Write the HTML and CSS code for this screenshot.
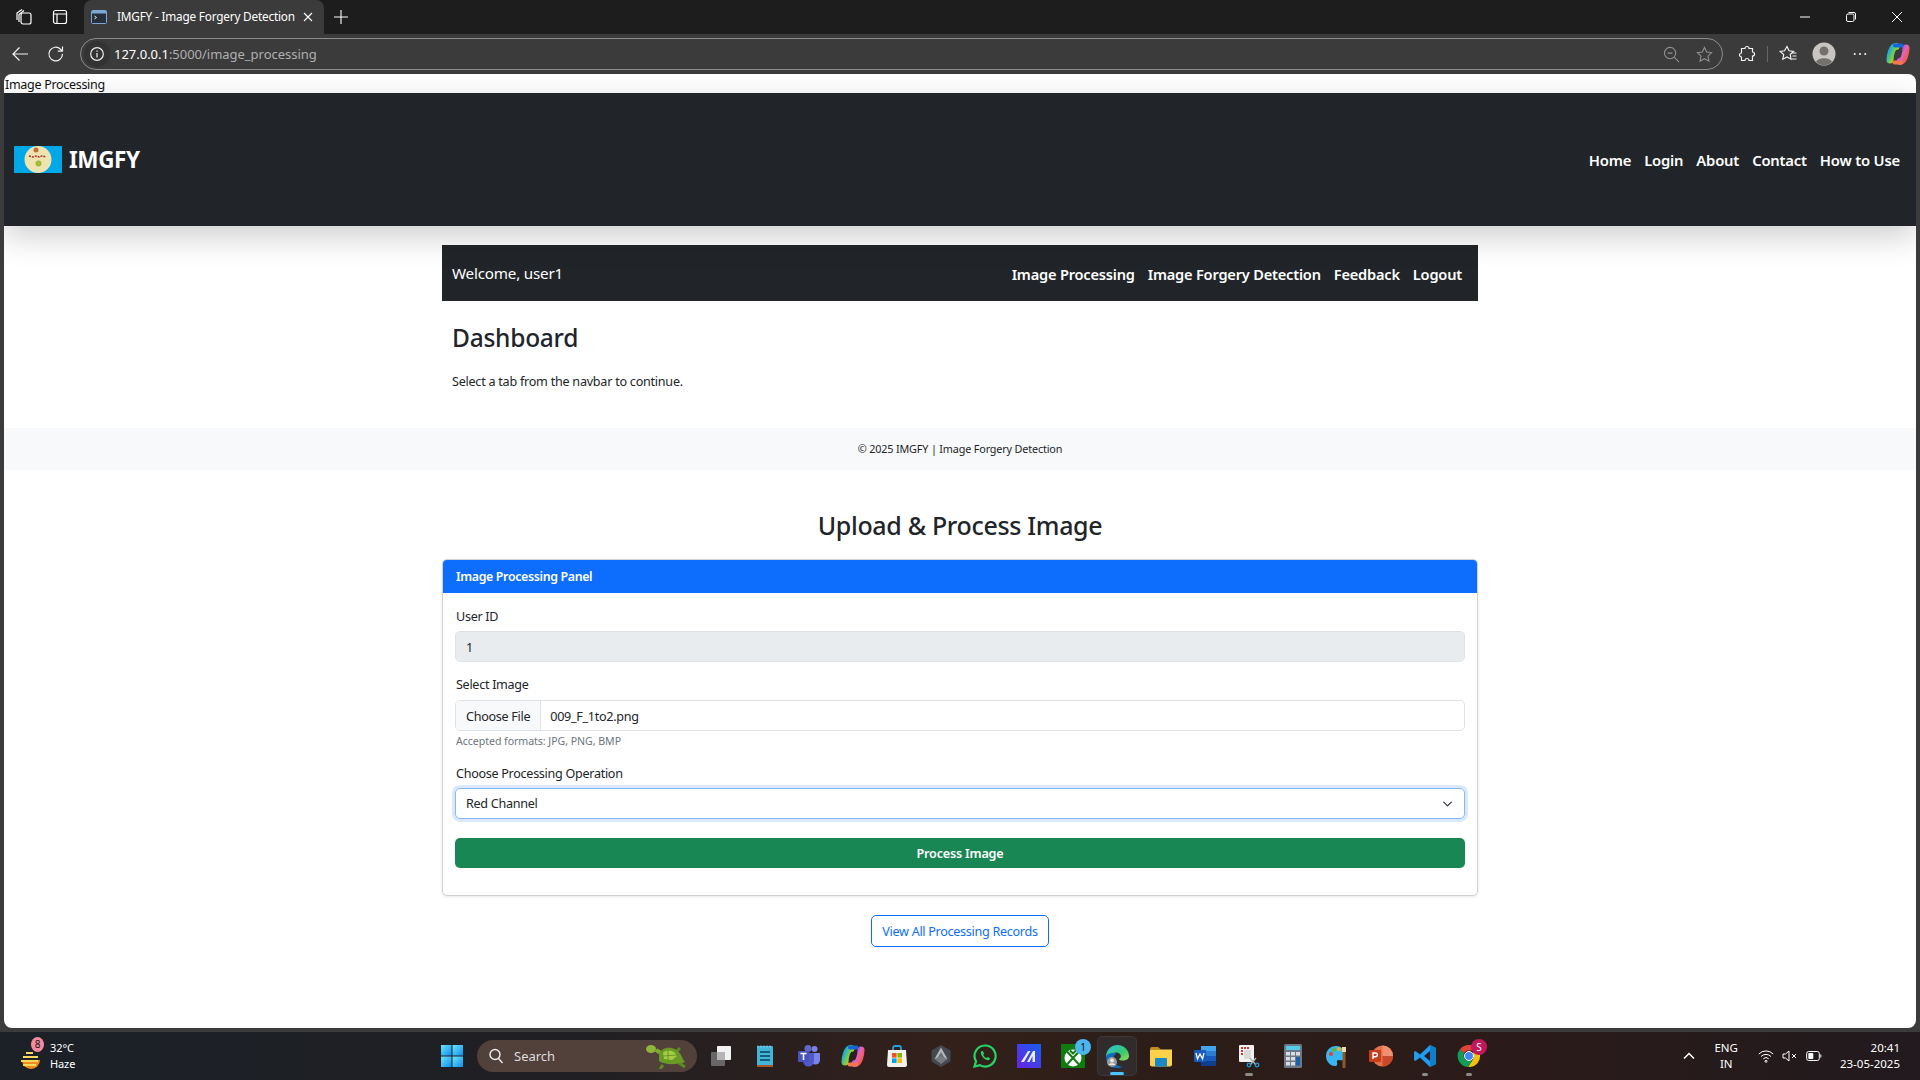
FILE: index.html
```html
<!DOCTYPE html>
<html lang="en">
<head>
    <meta charset="UTF-8">
    <meta name="viewport" content="width=device-width, initial-scale=1.0">
    <title>IMGFY - Image Forgery Detection</title>
    <link rel="stylesheet" href="styles.css">
</head>
<body>
    <!-- Tab strip -->
    <div class="tab-strip">
        <svg class="strip-icon" viewBox="0 0 18 18"><rect x="6" y="5" width="10" height="11" rx="2"/><path d="M4 14V6.500L9 2.500M2 12V5L7 1.500"/></svg>
        <svg class="strip-icon" viewBox="0 0 18 18"><rect x="2.500" y="2.500" width="13" height="13" rx="2"/><path d="M2.500 6h13M6 6v9.500"/></svg>
        <div class="tab">
            <svg class="tab-favicon" viewBox="0 0 16 16"><rect x=".5" y="1.500" width="15" height="13" rx="1" fill="#26303c" stroke="#7ea6d6"/><rect x="1" y="2" width="14" height="2.500" fill="#7ea6d6"/><path d="M3.500 7l2 1.500-2 1.500" fill="none" stroke="#fff" stroke-width=".9"/></svg>
            <span class="tab-title">IMGFY - Image Forgery Detection</span>
            <svg class="tab-close" viewBox="0 0 10 10"><path d="M1 1l8 8M9 1l-8 8"/></svg>
        </div>
        <svg class="tab-new" viewBox="0 0 14 14"><path d="M7 0v14M0 7h14"/></svg>
        <div class="window-controls">
            <svg viewBox="0 0 12 12"><path d="M1 6h10"/></svg>
            <svg viewBox="0 0 12 12"><rect x="1.500" y="3" width="7.500" height="7.500" rx="1.500"/><path d="M3.500 1.500h5.500a1.500 1.500 0 0 1 1.500 1.500v5.500"/></svg>
            <svg viewBox="0 0 12 12"><path d="M1 1l10 10M11 1L1 11"/></svg>
        </div>
    </div>

    <!-- Toolbar -->
    <div class="toolbar">
        <svg class="tool-icon" viewBox="0 0 18 18"><path d="M17 9H2M8.500 2.500L2 9l6.500 6.500"/></svg>
        <svg class="tool-icon" viewBox="0 0 18 18"><path d="M15.500 9a6.800 6.800 0 1 1-2-4.800L15.500 6.200M15.500 1.500v4.700h-4.700"/></svg>
        <div class="address-bar">
            <span class="site-info"><svg viewBox="0 0 16 16"><circle cx="8" cy="8" r="6.300"/><path d="M8 7v4.500M8 4.400v1.300"/></svg></span>
            <span class="url"><b>127.0.0.1</b>:5000/image_processing</span>
            <svg class="addr-icon" viewBox="0 0 18 18"><circle cx="7.500" cy="7.500" r="6"/><path d="M5 7.500h5M12 12l5 5"/></svg>
            <svg class="addr-icon" viewBox="0 0 18 18"><path d="M9 1.500l2.300 4.900 5.200.7-3.800 3.700 1 5.300L9 13.500l-4.700 2.600 1-5.300L1.500 7.100l5.200-.7z"/></svg>
        </div>
        <svg class="tool-icon puzzle" viewBox="0 0 18 18"><path d="M7 3.500a2 2 0 1 1 4 0h3.500V7a2 2 0 1 1 0 4v4.500H11a2 2 0 1 0-4 0H3.500V12a2 2 0 1 1 0-4V3.500z"/></svg>
        <span class="tool-divider"></span>
        <svg class="tool-icon favs" viewBox="0 0 18 18"><path d="M8 1.500l2 4.300 4.500.6-3.300 3.100.9 4.700L8 12l-4.200 2.200.9-4.700L1 6.400l4.500-.6zM13 8h4.500M13.500 11h4M13 14h4.500"/></svg>
        <svg class="avatar" viewBox="0 0 24 24"><circle cx="12" cy="12" r="11.500" fill="#c9c6c1"/><circle cx="12" cy="9" r="4.500" fill="#74716d"/><path d="M4 20c2-5 14-5 16 0a11.500 11.500 0 0 1-16 0z" fill="#74716d"/></svg>
        <svg class="tool-icon dots" viewBox="0 0 16 4"><circle cx="2" cy="2" r="1.200"/><circle cx="8" cy="2" r="1.200"/><circle cx="14" cy="2" r="1.200"/></svg>
        <svg class="copilot" viewBox="0 0 24 24"><use href="#copilot-shape"/></svg>
    </div>

    <div class="viewport-frame">
        <div class="page">
            <div class="page-label">Image Processing</div>

            <nav class="top-nav">
                <a class="brand">
                    <span class="brand-logo">
                        <svg viewBox="0 0 48 27"><rect width="48" height="27" fill="#00a8e8"/><circle cx="24" cy="13.500" r="13.500" fill="#efe3b0"/><path d="M15 10l4 1 3-1 3 1 3-1 4 1" fill="none" stroke="#a8322e" stroke-width="1.500" stroke-dasharray="2 1"/><circle cx="22" cy="4" r="2.500" fill="#c2703a"/><circle cx="24.500" cy="17.500" r="3" fill="#8cbf3f"/><circle cx="24.500" cy="17.500" r="1.200" fill="#e8a825"/></svg>
                    </span>
                    IMGFY
                </a>
                <div class="nav-links main-links">
                    <a>Home</a>
                    <a>Login</a>
                    <a>About</a>
                    <a>Contact</a>
                    <a>How to Use</a>
                </div>
            </nav>

            <div class="container dashboard">
                <div class="user-nav">
                    <span class="welcome">Welcome, user1</span>
                    <div class="nav-links">
                        <a>Image Processing</a>
                        <a>Image Forgery Detection</a>
                        <a>Feedback</a>
                        <a>Logout</a>
                    </div>
                </div>
                <h1 class="dash-title">Dashboard</h1>
                <p class="dash-text">Select a tab from the navbar to continue.</p>
            </div>

            <footer class="page-footer">© 2025 IMGFY | Image Forgery Detection</footer>

            <div class="container upload">
                <h2 class="upload-title">Upload &amp; Process Image</h2>
                <div class="card">
                    <div class="card-header">Image Processing Panel</div>
                    <form class="card-body">
                        <label class="form-label label-first">User ID</label>
                        <input class="form-control" type="text" value="1" disabled>

                        <label class="form-label label-image">Select Image</label>
                        <div class="file-control">
                            <span class="file-btn">Choose File</span>
                            <span class="file-name">009_F_1to2.png</span>
                        </div>
                        <div class="form-hint">Accepted formats: JPG, PNG, BMP</div>

                        <label class="form-label label-operation">Choose Processing Operation</label>
                        <select class="form-select">
                            <option>Red Channel</option>
                        </select>

                        <button class="btn-process" type="button">Process Image</button>
                    </form>
                </div>
                <a class="btn-records">View All Processing Records</a>
            </div>
        </div>
    </div>

    <!-- Taskbar -->
    <div class="taskbar">
        <div class="weather">
            <span class="weather-icon">
                <svg viewBox="0 0 26 26"><path d="M4 15a9 9 0 0 0 18 0z" fill="#f08c1e"/><path d="M8 8h7M5 12h15M3 16h17M5 20h13" stroke="#f9d65c" stroke-width="2.200"/></svg>
                <span class="weather-badge">8</span>
            </span>
            <div class="weather-text">
                <span class="temp">32°C</span>
                <span>Haze</span>
            </div>
        </div>

        <div class="task-center">
            <span class="task-item">
                <svg viewBox="0 0 24 24"><defs><linearGradient id="win" x1="0" y1="0" x2="1" y2="1"><stop offset="0" stop-color="#6fe3fb"/><stop offset="1" stop-color="#0a8ff0"/></linearGradient></defs><rect x="1" y="1" width="10.500" height="10.500" fill="url(#win)"/><rect x="12.500" y="1" width="10.500" height="10.500" fill="url(#win)"/><rect x="1" y="12.500" width="10.500" height="10.500" fill="url(#win)"/><rect x="12.500" y="12.500" width="10.500" height="10.500" fill="url(#win)"/></svg>
            </span>
            <div class="task-search">
                <svg viewBox="0 0 16 16"><circle cx="7" cy="6.500" r="5"/><path d="M10.500 10.500l4 4.500"/></svg>
                <span>Search</span>
                <svg class="turtle" viewBox="0 0 42 26"><path d="M17 22l-3 4M33 20l6 4M31 8l3-3" stroke="#5d8a22" stroke-width="3"/><path d="M10 7l8 5" stroke="#7fa933" stroke-width="4"/><ellipse cx="5" cy="6" rx="5" ry="4" fill="#8fb63a"/><path d="M13 11C17 2 30 3 35 12c2 4 3 6 4 7-8 3-21 3-26-1z" fill="#6a9a26"/><path d="M17 10c4-4 11-3 14 3l-5 4-8-1z" fill="#a2cc45"/><path d="M22 7v10M17 13l14-1" stroke="#5d8a22" stroke-width=".8"/></svg>
            </div>
            <span class="task-item">
                <svg viewBox="0 0 24 24"><rect x="8" y="2" width="14" height="14" rx="1" fill="#f2f2f2"/><rect x="2" y="8" width="14" height="14" rx="1" fill="#6f6f6f" opacity=".9"/><rect x="8" y="8" width="8" height="8" fill="#b5b5b5"/></svg>
            </span>
            <span class="task-item">
                <svg viewBox="0 0 24 24"><rect x="4" y="2" width="16" height="21" rx="1" fill="#45b4d9"/><rect x="4" y="21" width="16" height="2" fill="#a8562a"/><path d="M7 8h10M7 12h10M7 16h10" stroke="#135e7d" stroke-width="1.800"/><path d="M5 1.500v2M8 1.500v2M11 1.500v2M14 1.500v2M17 1.500v2" stroke="#8fd8ee"/></svg>
            </span>
            <span class="task-item">
                <svg viewBox="0 0 24 24"><circle cx="17.500" cy="5" r="3" fill="#7b83eb"/><circle cx="11" cy="4.500" r="3.500" fill="#6068c8"/><path d="M14 9h9v7a4.500 4.500 0 0 1-9 0z" fill="#7b83eb"/><path d="M6 9h11v8a5.500 5.500 0 0 1-11 0z" fill="#5059c9"/><rect x="1" y="7" width="11" height="11" rx="1" fill="#4a53bc"/><path d="M3.500 9.500h6M6.500 9.500V16" stroke="#fff" stroke-width="1.500"/></svg>
            </span>
            <span class="task-item">
                <svg viewBox="0 0 24 24"><use href="#copilot-shape"/></svg>
            </span>
            <span class="task-item">
                <svg viewBox="0 0 24 24"><path d="M8 6V4a2 2 0 0 1 2-2h4a2 2 0 0 1 2 2v2" fill="none" stroke="#20a4e0" stroke-width="1.800"/><path d="M3 6h18l1 15a2 2 0 0 1-2 2H4a2 2 0 0 1-2-2z" fill="#f3f1ee"/><rect x="7" y="9" width="4.600" height="4.600" fill="#f25022"/><rect x="12.400" y="9" width="4.600" height="4.600" fill="#7fba00"/><rect x="7" y="14.400" width="4.600" height="4.600" fill="#00a4ef"/><rect x="12.400" y="14.400" width="4.600" height="4.600" fill="#ffb900"/></svg>
            </span>
            <span class="task-item">
                <svg viewBox="0 0 24 24"><path d="M12 1l9.500 5.500v11L12 23l-9.500-5.500v-11z" fill="#45484d"/><path d="M12 3.500L18.500 15h-13z" fill="#b4b8bc"/><path d="M12 8l3.500 6h-7z" fill="#6a6e73"/><path d="M5.500 15l6.500-3 6.500 3-6.500 5z" fill="#777b80"/></svg>
            </span>
            <span class="task-item">
                <svg viewBox="0 0 24 24"><path d="M12 1.500a10.500 10.500 0 0 0-9 15.800L1.500 22.500l5.400-1.400A10.500 10.500 0 1 0 12 1.500z" fill="none" stroke="#25d366" stroke-width="2.200"/><path d="M8.500 7c-1 1-1 3 .8 5.500s4 3.800 5.700 3.800c1 0 2-1 2-2l-2.500-1.300-1 1c-1.500-.5-2.800-1.900-3.300-3.300l1-1L9.800 7z" fill="#25d366"/></svg>
            </span>
            <span class="task-item">
                <svg viewBox="0 0 24 24"><defs><linearGradient id="mark" x1="0" y1="1" x2="1" y2="0"><stop offset="0" stop-color="#6a22e0"/><stop offset="1" stop-color="#1560f0"/></linearGradient></defs><rect width="24" height="24" fill="url(#mark)"/><path d="M4 18L11 7h2.500L7 18zM10 18l6-11h2v11h-2.500v-6L12.500 18z" fill="#e8ecff"/></svg>
            </span>
            <span class="task-item">
                <svg viewBox="0 0 24 24"><rect width="24" height="24" rx="1" fill="#107c10"/><circle cx="12" cy="14" r="8.500" fill="#fff"/><path d="M6 7.500L18.500 21M18 7.500L5.500 21M9 6.500l3 3 3-3" fill="none" stroke="#107c10" stroke-width="2"/></svg>
                <span class="task-badge">1</span>
            </span>
            <span class="task-item active">
                <svg viewBox="0 0 24 24"><defs><linearGradient id="edge" x1="0" y1="0" x2="1" y2="1"><stop offset="0" stop-color="#2fc3e0"/><stop offset=".6" stop-color="#35c86e"/><stop offset="1" stop-color="#a0dc5a"/></linearGradient></defs><path d="M1 13C1 5 7 1 12.500 1 19 1 24 6 24 12c0 3-3 4.500-6 4.500-2.500 0-4-.5-4-1.500 2-1 2.500-3 1-5-2-2.500-8-2-10 1.500z" fill="url(#edge)"/><path d="M1 13c0 6 4 11 11 11 2 0 4-.5 6-1.500-4 .5-9-2-9.500-7-.3-3 1-5 3-6-5-1.500-10 .5-10.500 3.500z" fill="#0f6cbd"/><circle cx="7" cy="18" r="5" fill="#9a9a9a"/><circle cx="7" cy="16.500" r="2" fill="#e8e8e8"/><path d="M3.500 21c1-2.500 6-2.500 7 0z" fill="#e8e8e8"/></svg>
                <span class="task-dot"></span>
            </span>
            <span class="task-item">
                <svg viewBox="0 0 24 24"><path d="M1 5a2 2 0 0 1 2-2h6l3 2.500h-11z" fill="#c58a17"/><path d="M1 5.500h22v15a2 2 0 0 1-2 2H3a2 2 0 0 1-2-2z" fill="#fbd24a"/><rect x="6" y="14" width="12" height="8.500" rx="1" fill="#1a87c9"/></svg>
            </span>
            <span class="task-item">
                <svg viewBox="0 0 24 24"><rect x="8" y="2" width="15" height="20" rx="1" fill="#103f91"/><rect x="8" y="2" width="15" height="5" fill="#41a5ee"/><rect x="8" y="7" width="15" height="5" fill="#2b7cd3"/><rect x="8" y="12" width="15" height="5" fill="#185abd"/><rect x="1" y="6" width="12" height="12" rx="1" fill="#185abd"/><path d="M3 9l1.500 6L7 10l2.500 5L11 9" fill="none" stroke="#fff" stroke-width="1.300"/></svg>
            </span>
            <span class="task-item">
                <svg viewBox="0 0 24 24"><rect x="2" y="1" width="15" height="17" rx="1" fill="#f2f2f2"/><path d="M4 3h2v2H4zM7 3h2v2H7zM10 3h2v2h-2zM4 6h2v2H4zM4 9h2v2H4z" fill="#d13a2a"/><rect x="7" y="6" width="7" height="9" fill="#dadada"/><path d="M13 14l6 7M19 14l-6 7" stroke="#b0b0b0" stroke-width="1.500"/><circle cx="12" cy="21" r="1.800" fill="none" stroke="#1d9bd8" stroke-width="1.300"/><circle cx="20" cy="21" r="1.800" fill="none" stroke="#1d9bd8" stroke-width="1.300"/></svg>
                <span class="task-dot muted wide"></span>
            </span>
            <span class="task-item">
                <svg viewBox="0 0 24 24"><rect x="3" y="0" width="18" height="24" rx="1.500" fill="#6c7883"/><rect x="5" y="2" width="14" height="4" fill="#55cde8"/><path d="M5 8h4v3.500H5zM10 8h4v3.500h-4zM15 8h4v3.500h-4zM5 13h4v3.500H5zM10 13h4v3.500h-4zM5 18h4v3.500H5zM10 18h4v3.500h-4z" fill="#d8dde1"/><rect x="15" y="13" width="4" height="8.500" fill="#1a5fa8"/></svg>
            </span>
            <span class="task-item">
                <svg viewBox="0 0 24 24"><path d="M11 2C5 2 1 6.500 1 12s4 10 9 10c2.500 0 2.500-2 2-3.500s.5-3 2-2.500 5 1 5-3V8c-1-4-4-6-8-6z" fill="#39b5ef"/><circle cx="6" cy="10" r="2" fill="#d8452e"/><circle cx="9" cy="6" r="2" fill="#62b53a"/><circle cx="14" cy="5" r="2" fill="#f2b01e"/><rect x="17.500" y="7" width="3" height="17" fill="#8a5a2a"/><rect x="17" y="3" width="4" height="5" fill="#f0d9a8"/></svg>
            </span>
            <span class="task-item">
                <svg viewBox="0 0 24 24"><circle cx="13.500" cy="12" r="10.500" fill="#e2704a"/><path d="M13.500 1.500A10.500 10.500 0 0 1 24 12H13.500z" fill="#f0906c"/><path d="M13.500 12H24a10.500 10.500 0 0 1-10.500 10.500z" fill="#c9492a"/><rect x="0" y="6" width="12" height="12" rx="1" fill="#c43e1c"/><path d="M4 15V9h2.500a1.800 1.800 0 0 1 0 3.700H4" fill="none" stroke="#fff" stroke-width="1.400"/></svg>
            </span>
            <span class="task-item">
                <svg viewBox="0 0 24 24"><path d="M17 1l6 3v16l-6 3L7 13.500 2.500 17 1 16v-8l1.500-1L7 10.500zM17 7l-6 5 6 5z" fill="#1f9cf0"/><path d="M17 1l6 3v16l-6 3z" fill="#0f7ecb"/></svg>
                <span class="task-dot muted"></span>
            </span>
            <span class="task-item">
                <svg viewBox="0 0 24 24"><path d="M12 1a11 11 0 0 1 9.500 5.500H12a5.500 5.500 0 0 0-5 3L2.800 5.500A11 11 0 0 1 12 1z" fill="#db4437"/><path d="M21.500 6.500A11 11 0 0 1 11 23l4.800-7.500a5.500 5.500 0 0 0 .4-5.500L16 6.500z" fill="#f4c20d"/><path d="M2.800 5.500L7 9.500a5.500 5.500 0 0 0 8.800 6L11 23A11 11 0 0 1 2.800 5.500z" fill="#0f9d58"/><circle cx="12" cy="12" r="4.500" fill="#4285f4" stroke="#fff"/></svg>
                <span class="task-badge profile">S</span>
                <span class="task-dot muted"></span>
            </span>
        </div>

        <div class="tray">
            <svg class="tray-chevron" viewBox="0 0 12 8"><path d="M1 6.500l5-5 5 5"/></svg>
            <div class="tray-lang"><span>ENG</span><span>IN</span></div>
            <svg class="tray-icon" viewBox="0 0 16 16"><path d="M.8 6a10 10 0 0 1 14.400 0M3 8.500a7 7 0 0 1 10 0M5.300 10.800a3.800 3.800 0 0 1 5.400 0"/><circle cx="8" cy="13.300" r="1"/></svg>
            <svg class="tray-icon" viewBox="0 0 16 16"><path d="M1 6v4h2.500L7 13V3L3.500 6zM10 6l4 4M14 6l-4 4"/></svg>
            <svg class="tray-icon" viewBox="0 0 16 16"><rect x=".7" y="3.500" width="12.600" height="9" rx="2"/><path d="M14.800 6.500v3"/><rect x="2.300" y="5" width="5" height="6" rx=".8" fill="#fff" stroke="none"/></svg>
            <div class="tray-clock"><span>20:41</span><span>23-05-2025</span></div>
        </div>
    </div>

    <!-- Copilot mark, used in the toolbar and in the taskbar -->
    <svg class="defs-holder" width="0" height="0">
        <defs>
            <linearGradient id="cop-a" x1="0" y1="0" x2="1" y2="1"><stop offset="0" stop-color="#1aa5e8"/><stop offset=".55" stop-color="#6fd04c"/><stop offset="1" stop-color="#f5c32c"/></linearGradient>
            <linearGradient id="cop-b" x1="0" y1="0" x2="1" y2="1"><stop offset="0" stop-color="#7a5be8"/><stop offset=".5" stop-color="#e663b8"/><stop offset="1" stop-color="#f4583a"/></linearGradient>
            <symbol id="copilot-shape" viewBox="0 0 24 24">
                <path d="M10 4.500C6 4.500 4 13 4 18" fill="none" stroke="url(#cop-a)" stroke-width="7" stroke-linecap="round"/>
                <path d="M14 19.500c4 0 6-8.500 6-13.500" fill="none" stroke="url(#cop-b)" stroke-width="7" stroke-linecap="round"/>
                <path d="M9 3.500h6.500" stroke="#1466d8" stroke-width="4" stroke-linecap="round"/>
                <path d="M8.500 20.500H15" stroke="#f4764a" stroke-width="4" stroke-linecap="round"/>
            </symbol>
        </defs>
    </svg>
</body>
</html>
```

FILE: styles.css
```css
* {
    margin: 0;
    padding: 0;
    box-sizing: border-box;
}

html, body {
    height: 1080px;
    overflow: hidden;
}

body {
    font-family: "Noto Sans", "Open Sans", Arial, sans-serif;
    background: #3b3b3b;
    color: #212529;
    display: flex;
    flex-direction: column;
}

svg {
    display: block;
    flex: none;
}

.defs-holder {
    position: absolute;
}

/* Tab strip */
.tab-strip {
    height: 34px;
    background: #1d1d1d;
    display: flex;
    align-items: center;
    padding-left: 15px;
    flex: none;
}

.strip-icon {
    width: 18px;
    height: 18px;
    margin-right: 18px;
    fill: none;
    stroke: #fff;
    stroke-width: 1.2;
}

.tab {
    width: 240px;
    height: 34px;
    margin-left: -3px;
    background: #3b3b3b;
    border-radius: 8px 8px 0 0;
    display: flex;
    align-items: center;
    padding-left: 7px;
}

.tab-favicon {
    width: 16px;
    height: 16px;
    margin-right: 10px;
}

.tab-title {
    color: #fff;
    font-size: 11.800px;
    line-height: 14px;
    margin-top: -3px;
    white-space: nowrap;
    width: 177px;
    letter-spacing: -0.2px;
}

.tab-close {
    width: 10px;
    height: 10px;
    margin-left: 9px;
    fill: none;
    stroke: #fff;
    stroke-width: 1.1;
}

.tab-new {
    width: 14px;
    height: 14px;
    margin-left: 10px;
    fill: none;
    stroke: #fff;
    stroke-width: 1.1;
}

.window-controls {
    margin-left: auto;
    display: flex;
    gap: 34px;
    padding-right: 17px;
}

.window-controls svg {
    width: 12px;
    height: 12px;
    fill: none;
    stroke: #fff;
    stroke-width: 1;
}

/* Toolbar */
.toolbar {
    height: 40px;
    background: #3b3b3b;
    display: flex;
    align-items: center;
    padding-left: 11px;
    flex: none;
}

.tool-icon {
    width: 18px;
    height: 18px;
    margin-right: 18px;
    fill: none;
    stroke: #f2f2f2;
    stroke-width: 1.2;
}

.address-bar {
    width: 1643px;
    height: 32px;
    margin-left: -3px;
    border: 1px solid #8d8d8d;
    border-radius: 16px;
    display: flex;
    align-items: center;
    padding-left: 3px;
}

.site-info {
    width: 26px;
    height: 26px;
    border-radius: 50%;
    background: #333;
    display: flex;
    align-items: center;
    justify-content: center;
    margin-right: 4px;
}

.site-info svg {
    width: 16px;
    height: 16px;
    fill: none;
    stroke: #eee;
    stroke-width: 1.2;
}

.url {
    font-size: 13px;
    color: #b0b0b0;
    letter-spacing: -0.02px;
}

.url b {
    color: #fff;
    font-weight: 400;
}

.addr-icon {
    width: 17px;
    height: 17px;
    margin-left: 16px;
    fill: none;
    stroke: #8f8f8f;
    stroke-width: 1.2;
}

.addr-icon:nth-of-type(1) {
    margin-left: auto;
}

.addr-icon:last-child {
    margin-right: 9px;
}

.puzzle {
    margin-left: 15px;
    margin-right: 11px;
}

.tool-divider {
    width: 1px;
    height: 16px;
    background: #666;
    margin-right: 11px;
}

.favs {
    margin-right: 15px;
}

.avatar {
    width: 24px;
    height: 24px;
    margin-right: 17px;
}

.dots {
    width: 14px;
    height: 4px;
    fill: #f2f2f2;
    stroke: none;
    margin-right: 19px;
}

.copilot {
    width: 24px;
    height: 24px;
}

/* Page area */
.viewport-frame {
    height: 958px;
    padding: 0 4px 4px;
    flex: none;
}

.page {
    height: 954px;
    background: #fff;
    border-radius: 8px;
    overflow: hidden;
}

.page-label {
    height: 19px;
    font-size: 12.500px;
    line-height: 21px;
    padding-left: 1px;
    color: #111;
    letter-spacing: -0.3px;
}

.nav-links {
    display: flex;
    gap: 13px;
    font-size: 14.600px;
    font-weight: 600;
    color: #fff;
    letter-spacing: -0.2px;
}

.main-links {
    font-size: 14.800px;
}

.top-nav {
    height: 133px;
    background: #212529;
    display: flex;
    align-items: center;
    justify-content: space-between;
    padding: 0 16px 0 10px;
    box-shadow: 0 10px 30px rgba(0, 0, 0, 0.2);
    position: relative;
}

.brand {
    display: flex;
    align-items: center;
    gap: 7px;
    color: #fff;
    font-size: 22.500px;
    font-weight: 700;
    letter-spacing: -0.4px;
}

.brand-logo svg {
    width: 48px;
    height: 27px;
}

.container {
    width: 1036px;
    margin: 0 auto;
}

/* Dashboard */
.dashboard {
    padding-top: 19px;
}

.user-nav {
    height: 56px;
    background: #212529;
    display: flex;
    align-items: center;
    justify-content: space-between;
    padding: 0 16px 0 10px;
}

.user-nav .nav-links {
    padding-top: 2px;
}

.welcome {
    color: #fff;
    font-size: 15.200px;
    letter-spacing: -0.2px;
}

.dash-title {
    font-size: 24.500px;
    line-height: 36px;
    font-weight: 500;
    margin: 19px 0 0 10px;
    letter-spacing: -0.25px;
}

.dash-text {
    font-size: 12.600px;
    line-height: 20px;
    margin: 16px 0 0 10px;
    letter-spacing: -0.25px;
}

.page-footer {
    height: 42px;
    margin-top: 36px;
    background: #f8f9fa;
    font-size: 10.800px;
    line-height: 42px;
    text-align: center;
    letter-spacing: -0.15px;
}

/* Upload form */
.upload {
    text-align: center;
}

.upload-title {
    font-size: 25px;
    line-height: 36px;
    font-weight: 500;
    margin-top: 37px;
    letter-spacing: -0.33px;
}

.card {
    height: 337px;
    margin-top: 16px;
    border: 1px solid #d0d0d0;
    border-radius: 5px;
    box-shadow: 0 1px 3px rgba(0, 0, 0, 0.1);
    text-align: left;
    overflow: hidden;
}

.card-header {
    height: 33px;
    background: #0d6efd;
    color: #fff;
    font-size: 12.400px;
    font-weight: 600;
    line-height: 33px;
    padding-left: 13px;
    letter-spacing: -0.35px;
}

.card-body {
    padding: 0 12px;
}

.form-label {
    display: block;
    font-size: 12.600px;
    line-height: 20px;
    letter-spacing: -0.3px;
    padding-left: 1px;
}

.label-first {
    margin-top: 14px;
}

.label-image {
    margin-top: 13px;
}

.label-operation {
    margin-top: 15px;
}

.form-control,
.form-select {
    display: block;
    width: 100%;
    height: 31px;
    margin-top: 4px;
    font-family: inherit;
    font-size: 12.600px;
    color: #212529;
    letter-spacing: -0.3px;
    padding: 0 10px;
    border: 1px solid #dee2e6;
    border-radius: 5px;
    outline: none;
}

.form-control {
    padding-top: 1px;
}

.form-control:disabled {
    background: #e9ecef;
    opacity: 1;
}

.file-control {
    height: 31px;
    margin-top: 5px;
    display: flex;
    align-items: center;
    border: 1px solid #dee2e6;
    border-radius: 5px;
    font-size: 12.600px;
    letter-spacing: -0.3px;
    overflow: hidden;
}

.file-btn {
    height: 100%;
    background: #f8f9fa;
    border-right: 1px solid #dee2e6;
    padding: 0 10px;
    line-height: 31px;
    margin-right: 9px;
}

.file-name {
    padding-top: 1px;
}

.form-hint {
    font-size: 10.600px;
    line-height: 16px;
    margin-top: 2px;
    padding-left: 1px;
    color: #6c757d;
    letter-spacing: -0.05px;
}

.form-select {
    appearance: none;
    background: #fff url("data:image/svg+xml,%3csvg xmlns='http://www.w3.org/2000/svg' viewBox='0 0 16 16'%3e%3cpath fill='none' stroke='%23343a40' stroke-linecap='round' stroke-linejoin='round' stroke-width='2' d='m2 5 6 6 6-6'/%3e%3c/svg%3e") no-repeat right 10px center / 13px 10px;
    border-color: #86b7fe;
    box-shadow: 0 0 0 3px rgba(13, 110, 253, 0.15);
}

.btn-process {
    display: block;
    width: 100%;
    height: 30px;
    margin-top: 19px;
    background: #198754;
    border: none;
    border-radius: 5px;
    color: #fff;
    font-family: inherit;
    font-size: 12.600px;
    font-weight: 600;
    letter-spacing: -0.2px;
}

.btn-records {
    display: inline-block;
    height: 32px;
    width: 178px;
    margin-top: 19px;
    border: 1px solid #0d6efd;
    border-radius: 5px;
    color: #0d6efd;
    font-size: 12.600px;
    line-height: 31px;
    letter-spacing: -0.3px;
}

/* Taskbar */
.taskbar {
    height: 48px;
    flex: none;
    display: flex;
    align-items: center;
    background: linear-gradient(90deg, #1b2127 0%, #201f23 30%, #33201a 50%, #2c1d18 60%, #2a1b1a 80%, #211a1e 100%);
    color: #fff;
    font-size: 11.500px;
    position: relative;
}

.weather {
    width: 430px;
    display: flex;
    align-items: center;
    padding-left: 18px;
    flex: none;
}

.weather-icon {
    position: relative;
    width: 26px;
    height: 26px;
    margin-right: 6px;
    margin-top: 4px;
}

.weather-badge {
    position: absolute;
    left: 13px;
    top: -8px;
    width: 13px;
    height: 15px;
    border-radius: 50%;
    background: #f58a9d;
    color: #111;
    font-size: 10px;
    line-height: 15px;
    text-align: center;
}

.weather-text {
    display: flex;
    flex-direction: column;
    line-height: 16px;
    font-size: 11px;
    letter-spacing: -0.1px;
}

.temp {
    color: #fff;
}

.task-center {
    display: flex;
    align-items: center;
    height: 100%;
}

.task-item {
    position: relative;
    width: 44px;
    height: 40px;
    display: flex;
    align-items: center;
    justify-content: center;
    border-radius: 5px;
}

.task-item svg {
    width: 24px;
    height: 24px;
}

.task-item.active {
    width: 40px;
    margin: 0 2px;
    background: #312c2b;
    border: 1px solid #3c3837;
}

.task-search {
    width: 220px;
    height: 32px;
    margin: 0 2px 0 3px;
    background: #52403a;
    border-radius: 16px;
    display: flex;
    align-items: center;
    padding-left: 11px;
    font-size: 13px;
    color: #ddd;
    position: relative;
}

.task-search > svg:first-child {
    width: 16px;
    height: 16px;
    margin-right: 10px;
    fill: none;
    stroke: #eee;
    stroke-width: 1.400;
}

.turtle {
    width: 42px;
    height: 26px;
    margin-left: auto;
    margin-right: 9px;
}

.task-badge {
    position: absolute;
    top: 3px;
    right: 4px;
    width: 16px;
    height: 16px;
    border-radius: 50%;
    background: #4cb5ee;
    color: #111;
    font-size: 10px;
    line-height: 16px;
    text-align: center;
}

.task-badge.profile {
    background: #c2185b;
    color: #fff;
}

.task-dot {
    position: absolute;
    bottom: 0;
    left: 50%;
    width: 14px;
    height: 3px;
    margin-left: -7px;
    border-radius: 2px;
    background: #4cc2ff;
}

.task-dot.muted {
    width: 6px;
    margin-left: -3px;
    background: #8c8c8c;
}

.task-dot.muted.wide {
    width: 8px;
    margin-left: -4px;
}

.tray {
    margin-left: auto;
    display: flex;
    align-items: center;
    padding-right: 20px;
    font-size: 11.500px;
}

.tray-chevron {
    width: 12px;
    height: 8px;
    margin-right: 19px;
    fill: none;
    stroke: #fff;
    stroke-width: 1.500;
}

.tray-lang {
    display: flex;
    flex-direction: column;
    align-items: center;
    line-height: 16px;
    margin-right: 20px;
}

.tray-icon {
    width: 16px;
    height: 16px;
    margin-right: 8px;
    fill: none;
    stroke: #fff;
    stroke-width: 1;
}

.tray-clock {
    display: flex;
    flex-direction: column;
    align-items: flex-end;
    line-height: 16px;
    margin-left: 10px;
}
```
